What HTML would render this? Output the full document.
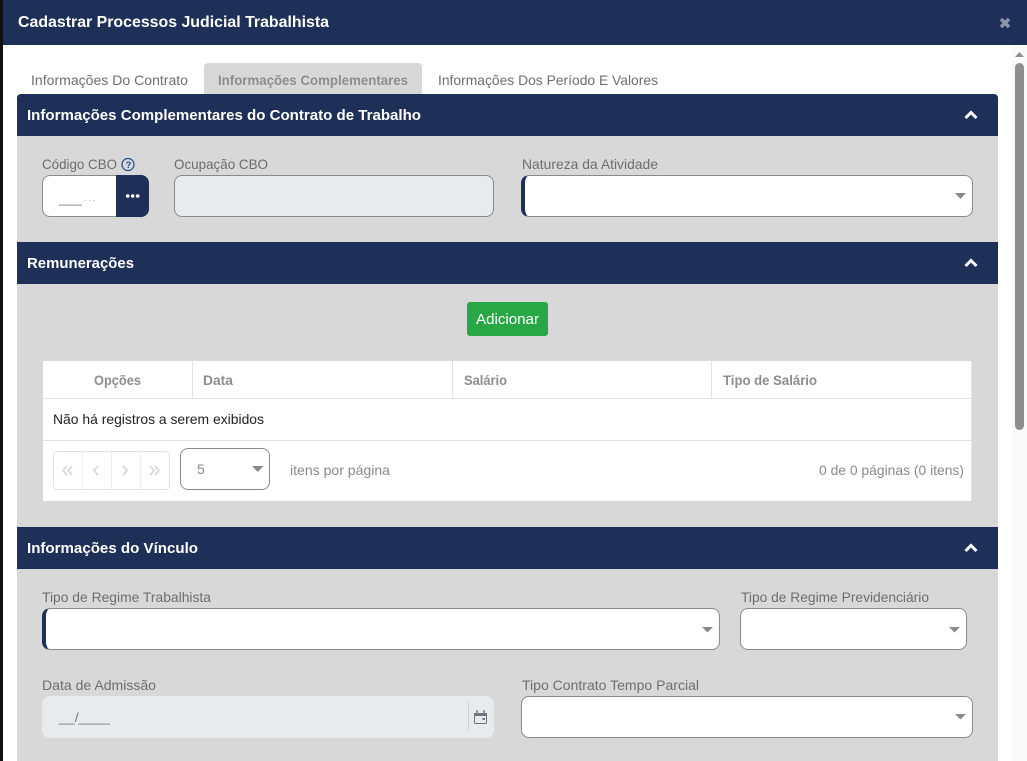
<!DOCTYPE html>
<html lang="pt"><head><meta charset="utf-8"><title>Cadastrar Processos Judicial Trabalhista</title>
<style>
html,body{margin:0;padding:0;width:1027px;height:761px;overflow:hidden;background:#fff}
.b{position:absolute;box-sizing:border-box}
.n{background:#1f3058}
.g{background:#d8d8d8}
.i{background:#fff;border:1px solid #8a8a8a;border-radius:8px;height:42px}
.d{background:#e8ebee;border-radius:8px}
.m{border-left:4px solid #1f3058}
svg.o{position:absolute;left:0;top:0}
text{font-family:"Liberation Sans",sans-serif}
.l{font-size:14px;fill:#6e6e6e}
.h{font-size:15px;font-weight:bold;fill:#fff}
.t{font-size:14px;font-weight:bold;fill:#8d8d8d}
</style></head><body>
<div class="b" style="left:0;top:0;width:3px;height:761px;background:#111"></div>
<div class="b n" style="left:3px;top:0;width:1024px;height:45px"></div>
<div class="b" style="left:1012px;top:45px;width:15px;height:716px;background:#fafafa"></div>
<div class="b" style="left:1015px;top:63px;width:9px;height:367px;background:#8e8e8e;border-radius:5px"></div>

<div class="b g" style="left:204px;top:63px;width:218px;height:31px;border-radius:4px 4px 0 0"></div>
<div class="b n" style="left:17px;top:94px;width:981px;height:42px;border-radius:4px 4px 0 0"></div>
<div class="b g" style="left:17px;top:136px;width:981px;height:106px"></div>
<div class="b n" style="left:17px;top:242px;width:981px;height:42px"></div>
<div class="b g" style="left:17px;top:284px;width:981px;height:243px"></div>
<div class="b n" style="left:17px;top:527px;width:981px;height:42px"></div>
<div class="b g" style="left:17px;top:569px;width:981px;height:192px"></div>

<div class="b i" style="left:42px;top:175px;width:75px;border-radius:8px 0 0 8px;border-right:0"></div>
<div class="b n" style="left:116px;top:175px;width:33px;height:42px;border-radius:0 8px 8px 0"></div>
<div class="b d" style="left:174px;top:175px;width:320px;height:42px;border:1px solid #8a8a8a"></div>
<div class="b i m" style="left:521px;top:175px;width:452px"></div>

<div class="b" style="left:467px;top:302px;width:81px;height:34px;background:#28a745;border-radius:3px"></div>

<div class="b" style="left:43px;top:361px;width:929px;height:140px;background:#fff;border-right:1px solid #dfe3e8"></div>
<div class="b" style="left:43px;top:398px;width:929px;height:1px;background:#dfe3e8"></div>
<div class="b" style="left:43px;top:440px;width:929px;height:1px;background:#dfe3e8"></div>
<div class="b" style="left:192px;top:361px;width:1px;height:37px;background:#dfe3e8"></div>
<div class="b" style="left:452px;top:361px;width:1px;height:37px;background:#dfe3e8"></div>
<div class="b" style="left:711px;top:361px;width:1px;height:37px;background:#dfe3e8"></div>

<div class="b" style="left:53px;top:451px;width:117px;height:39px;border:1px solid #e2e2e2;border-radius:4px"></div>
<div class="b" style="left:82px;top:452px;width:1px;height:37px;background:#eee"></div>
<div class="b" style="left:111px;top:452px;width:1px;height:37px;background:#eee"></div>
<div class="b" style="left:140px;top:452px;width:1px;height:37px;background:#eee"></div>
<div class="b i" style="left:180px;top:448px;width:90px"></div>

<div class="b i m" style="left:42px;top:608px;width:678px"></div>
<div class="b i" style="left:740px;top:608px;width:227px"></div>
<div class="b d" style="left:42px;top:696px;width:452px;height:42px"></div>
<div class="b" style="left:468px;top:702px;width:1px;height:29px;background:#cfd3d7"></div>
<div class="b i" style="left:521px;top:696px;width:452px"></div>

<svg class="o" width="1027" height="761" viewBox="0 0 1027 761">
<text x="18" y="27" textLength="311" lengthAdjust="spacingAndGlyphs" font-size="16" font-weight="bold" fill="#fff">Cadastrar Processos Judicial Trabalhista</text>
<text x="31" y="85" textLength="157" lengthAdjust="spacingAndGlyphs" class="l">Informações Do Contrato</text>
<text x="218" y="85" textLength="190" lengthAdjust="spacingAndGlyphs" class="t">Informações Complementares</text>
<text x="438" y="85" textLength="220" lengthAdjust="spacingAndGlyphs" class="l">Informações Dos Período E Valores</text>
<text x="27" y="120" textLength="394" lengthAdjust="spacingAndGlyphs" class="h">Informações Complementares do Contrato de Trabalho</text>
<text x="42" y="169" textLength="75" lengthAdjust="spacingAndGlyphs" class="l">Código CBO</text>
<text x="174" y="169" textLength="94" lengthAdjust="spacingAndGlyphs" class="l">Ocupação CBO</text>
<text x="522" y="169" textLength="136" lengthAdjust="spacingAndGlyphs" class="l">Natureza da Atividade</text>
<text x="59" y="203" textLength="23" lengthAdjust="spacingAndGlyphs" font-size="13" fill="#777">___</text>
<text x="84" y="201" textLength="11" lengthAdjust="spacing" font-size="8" fill="#999">...</text>
<text x="27" y="268" textLength="107" lengthAdjust="spacingAndGlyphs" class="h">Remunerações</text>
<text x="476" y="324" textLength="63" lengthAdjust="spacingAndGlyphs" font-size="14.5" fill="#fff">Adicionar</text>
<text x="94" y="385" textLength="47" lengthAdjust="spacingAndGlyphs" class="t">Opções</text>
<text x="203" y="385" textLength="30" lengthAdjust="spacingAndGlyphs" class="t">Data</text>
<text x="464" y="385" textLength="43" lengthAdjust="spacingAndGlyphs" class="t">Salário</text>
<text x="723" y="385" textLength="94" lengthAdjust="spacingAndGlyphs" class="t">Tipo de Salário</text>
<text x="53" y="424" textLength="211" lengthAdjust="spacingAndGlyphs" font-size="14" fill="#222">Não há registros a serem exibidos</text>
<text x="197" y="474" font-size="14" fill="#888">5</text>
<text x="290" y="475" textLength="100" lengthAdjust="spacingAndGlyphs" font-size="14" fill="#8a8a8a">itens por página</text>
<text x="819" y="475" textLength="145" lengthAdjust="spacingAndGlyphs" font-size="14" fill="#8a8a8a">0 de 0 páginas (0 itens)</text>
<text x="27" y="553" textLength="171" lengthAdjust="spacingAndGlyphs" class="h">Informações do Vínculo</text>
<text x="42" y="602" textLength="169" lengthAdjust="spacingAndGlyphs" class="l">Tipo de Regime Trabalhista</text>
<text x="741" y="602" textLength="188" lengthAdjust="spacingAndGlyphs" class="l">Tipo de Regime Previdenciário</text>
<text x="42" y="690" textLength="114" lengthAdjust="spacingAndGlyphs" class="l">Data de Admissão</text>
<text x="522" y="690" textLength="177" lengthAdjust="spacingAndGlyphs" class="l">Tipo Contrato Tempo Parcial</text>
<text x="59" y="722" textLength="51" lengthAdjust="spacingAndGlyphs" font-size="13" fill="#777">__/____</text>

<path d="M1001 19l8 8m0-8l-8 8" stroke="#8d96aa" stroke-width="3.500" fill="none"/>
<path d="M1015 57l4.500-5 4.500 5z" fill="#8e8e8e"/>
<g stroke="#fff" stroke-width="3" fill="none"><path d="M965.500 118l5.500-5.500 5.500 5.500"/><path d="M965.500 266l5.500-5.500 5.500 5.500"/><path d="M965.500 551l5.500-5.500 5.500 5.500"/></g>
<circle cx="128" cy="164.500" r="6" fill="none" stroke="#1f4a85" stroke-width="1.200"/>
<text x="125.800" y="168" font-size="9" font-weight="bold" fill="#1f4a85">?</text>
<g fill="#fff"><circle cx="127.700" cy="196" r="1.800"/><circle cx="132.700" cy="196" r="1.800"/><circle cx="137.700" cy="196" r="1.800"/></g>
<g fill="#8a8a8a"><path d="M955 193h11l-5.500 6z"/><path d="M252 466h11.500l-5.750 6z"/><path d="M702 627h11l-5.500 5.500z"/><path d="M949 627h11l-5.500 5.500z"/><path d="M955 714h11l-5.500 5.500z"/></g>
<g fill="none" stroke="#d8d8d8" stroke-width="1.800"><path d="M67 466l-4 4.500 4 4.500m5-9l-4 4.500 4 4.500"/><path d="M98 466l-4 4.500 4 4.500"/><path d="M123 466l4 4.500-4 4.500"/><path d="M150 466l4 4.500-4 4.500m5-9l4 4.500-4 4.500"/></g>
<rect x="474.500" y="713.500" width="12" height="10" rx="1" fill="none" stroke="#6b7580"/>
<path d="M474 713h13v3h-13zM482.500 718h2.500v2h-2.500z" fill="#6b7580"/>
<path d="M476 710h1.800v4h-1.800zM483.200 710h1.800v4h-1.800z" fill="#7f9088"/>
</svg>
</body></html>
